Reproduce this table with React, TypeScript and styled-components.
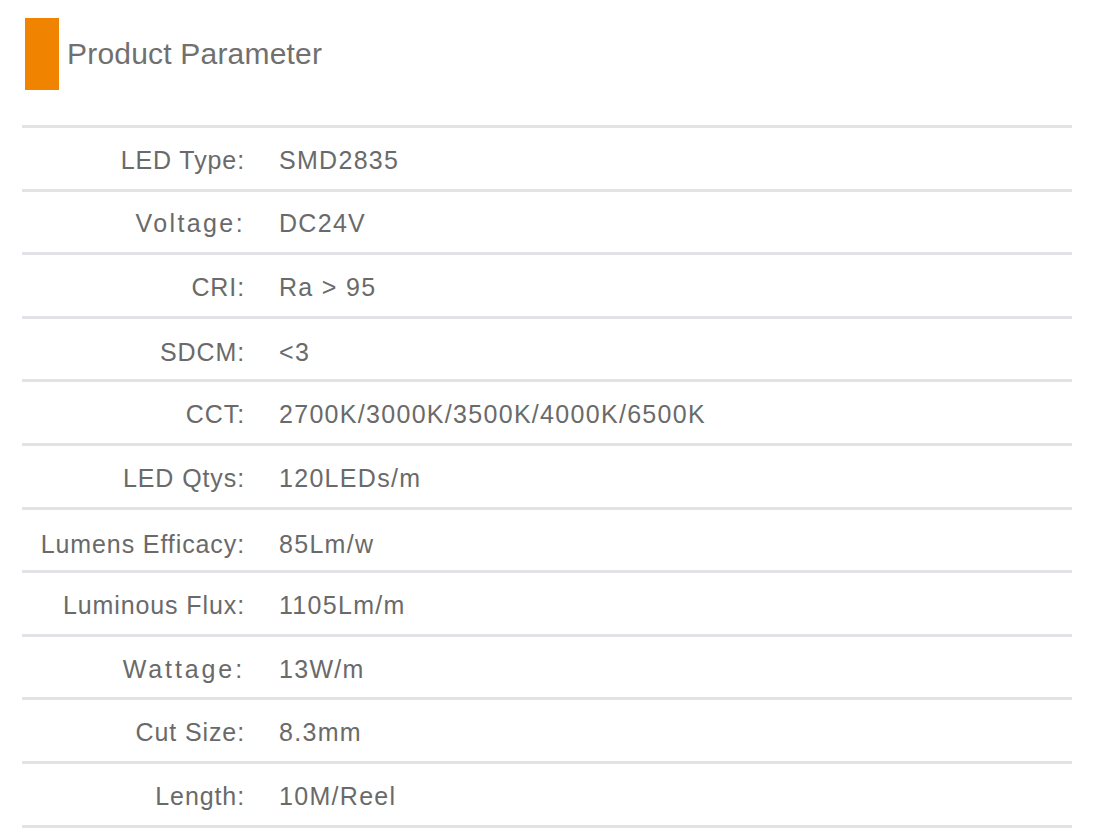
import React from "react";
import styled, { createGlobalStyle } from "styled-components";

const GlobalStyle = createGlobalStyle`
  html, body {
    margin: 0;
    padding: 0;
    background: #ffffff;
  }
  body {
    font-family: "Liberation Sans", Arial, "Noto Sans CJK SC", sans-serif;
  }
`;

const Page = styled.div`
  width: 1103px;
  height: 839px;
  background: #ffffff;
  overflow: hidden;
  padding-top: 18px;
  box-sizing: border-box;
`;

const Header = styled.div`
  display: flex;
  align-items: center;
  gap: 8px;
  margin-left: 25px;
  height: 72px;
`;

const Accent = styled.div`
  width: 34px;
  height: 72px;
  background: #f08300;
`;

const Title = styled.h2`
  margin: 0 0 1px 0;
  font-size: 30px;
  font-weight: 400;
  letter-spacing: 0.2px;
  color: #707070;
`;

const Table = styled.div`
  margin: 35px 0 0 22px;
  width: 1050px;
  border-top: 3px solid #e1e3e6;
`;

const Row = styled.div<{ $shift?: number }>`
  display: grid;
  grid-template-columns: 223px 1fr;
  column-gap: 34px;
  align-items: center;
  height: 63.6px;
  box-sizing: border-box;
  border-bottom: 3px solid #e1e3e6;
  padding-top: ${(p) => p.$shift ?? 4}px;
`;

const Label = styled.div<{ $spacing?: number }>`
  text-align: right;
  font-size: 25px;
  color: #6a6a6a;
  letter-spacing: ${(p) => p.$spacing ?? 0.9}px;
  white-space: nowrap;
`;

const Value = styled.div`
  font-size: 25px;
  color: #6a6a6a;
  letter-spacing: 1.3px;
  white-space: nowrap;
`;

type Param = { label: string; value: string; spacing?: number; shift?: number };

const params: Param[] = [
  { label: "LED Type:", value: "SMD2835" },
  { label: "Voltage:", value: "DC24V", spacing: 2.4 },
  { label: "CRI:", value: "Ra > 95" },
  { label: "SDCM:", value: "<3", shift: 6 },
  { label: "CCT:", value: "2700K/3000K/3500K/4000K/6500K" },
  { label: "LED Qtys:", value: "120LEDs/m" },
  { label: "Lumens Efficacy:", value: "85Lm/w", shift: 10 },
  { label: "Luminous Flux:", value: "1105Lm/m" },
  { label: "Wattage:", value: "13W/m", spacing: 2.9 },
  { label: "Cut Size:", value: "8.3mm" },
  { label: "Length:", value: "10M/Reel" },
];

export default function App() {
  return (
    <Page>
      <GlobalStyle />
      <Header>
        <Accent />
        <Title>Product Parameter</Title>
      </Header>
      <Table>
        {params.map((p) => (
          <Row key={p.label} $shift={p.shift}>
            <Label $spacing={p.spacing}>{p.label}</Label>
            <Value>{p.value}</Value>
          </Row>
        ))}
      </Table>
    </Page>
  );
}
